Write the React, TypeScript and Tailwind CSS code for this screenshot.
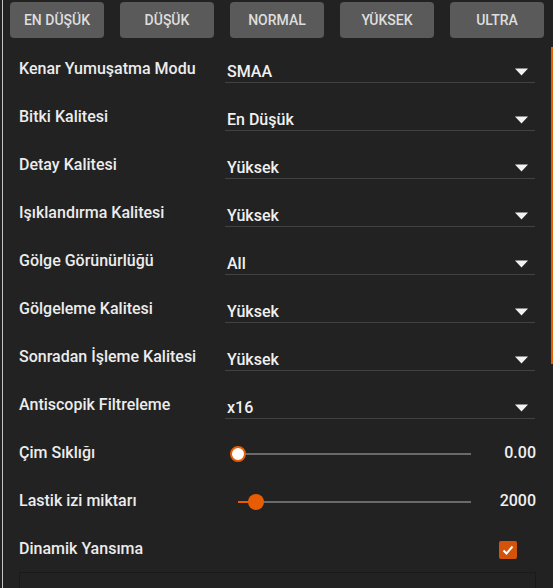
const presets = ['EN DÜŞÜK', 'DÜŞÜK', 'NORMAL', 'YÜKSEK', 'ULTRA']

const selects = [
  { label: 'Kenar Yumuşatma Modu', value: 'SMAA' },
  { label: 'Bitki Kalitesi', value: 'En Düşük' },
  { label: 'Detay Kalitesi', value: 'Yüksek' },
  { label: 'Işıklandırma Kalitesi', value: 'Yüksek' },
  { label: 'Gölge Görünürlüğü', value: 'All' },
  { label: 'Gölgeleme Kalitesi', value: 'Yüksek' },
  { label: 'Sonradan İşleme Kalitesi', value: 'Yüksek' },
  { label: 'Antiscopik Filtreleme', value: 'x16' },
]

function Arrow() {
  return (
    <svg width="13" height="8" viewBox="0 0 13 8">
      <path d="M0 0.5 L13 0.5 L6.5 7.5 Z" fill="#f2f2f2" />
    </svg>
  )
}

function SelectRow({ label, value }: { label: string; value: string }) {
  return (
    <div className="flex h-[48px] items-center">
      <div className="w-[206px] -mt-[2px] text-[16px] font-medium text-[#ececec]">{label}</div>
      <div className="flex h-[26px] w-[310px] items-center justify-between border-b border-[#424242] pl-[2px] pr-[7px] pt-[4px]">
        <span className="text-[16px] font-medium text-[#f0f0f0]">{value}</span>
        <Arrow />
      </div>
    </div>
  )
}

function SliderRow({ label, value, fill }: { label: string; value: string; fill: number }) {
  return (
    <div className="flex h-[48px] items-center">
      <div className="w-[219px] -mt-[2px] text-[16px] font-medium text-[#ececec]">{label}</div>
      <div className="relative h-[16px] w-[233px]">
        <div className="absolute left-0 right-0 top-[7px] h-[2px] bg-[#6a6a6a]" />
        {fill > 0 ? (
          <>
            <div className="absolute left-0 top-[7px] h-[2px] bg-[#e85d04]" style={{ width: fill }} />
            <div
              className="absolute top-0 h-[16px] w-[16px] -translate-x-1/2 rounded-full bg-[#e85d04]"
              style={{ left: fill }}
            />
          </>
        ) : (
          <div className="absolute left-0 top-0 h-[16px] w-[16px] -translate-x-1/2 rounded-full border-2 border-[#e85d04] bg-white" />
        )}
      </div>
      <div className="flex-1 -mt-[2px] text-right text-[16px] font-medium text-[#f0f0f0]">{value}</div>
    </div>
  )
}

export default function App() {
  return (
    <div
      className="relative h-[588px] w-[553px] overflow-hidden bg-[#222222] pl-[2px]"
      style={{ fontFamily: 'Roboto, "Noto Sans", sans-serif' }}
    >
      <div className="h-full border-l border-[#c4c4c4]">
        <div className="flex gap-[16px] pl-[7px] pt-[2px]">
          {presets.map((p) => (
            <div
              key={p}
              className="flex h-[36px] w-[94px] items-center justify-center rounded-[4px] bg-[#5a5a5a] text-[14px] font-medium text-[#dedede]"
            >
              {p}
            </div>
          ))}
        </div>

        <div className="mt-[8px] pl-[16px] pr-[17px]">
          {selects.map((s) => (
            <SelectRow key={s.label} label={s.label} value={s.value} />
          ))}
          <SliderRow label="Çim Sıklığı" value="0.00" fill={0} />
          <SliderRow label="Lastik izi miktarı" value="2000" fill={18} />
          <div className="flex h-[48px] items-center justify-between">
            <div className="-mt-[2px] text-[16px] font-medium text-[#ececec]">Dinamik Yansıma</div>
            <div className="mr-[19px] flex h-[18px] w-[18px] items-center justify-center rounded-[2px] bg-[#d4530a]">
              <svg width="12" height="10" viewBox="0 0 12 10">
                <path d="M1.5 5.5 L4.5 8.5 L10.5 1.5" fill="none" stroke="white" strokeWidth="2" />
              </svg>
            </div>
          </div>
          <div className="-mt-[2px] h-[40px] border border-[#1a1a1a]" />
        </div>
      </div>

      <div className="absolute right-0 top-[47px] h-[317px] w-[2px] bg-[#e85d04]" />
    </div>
  )
}
